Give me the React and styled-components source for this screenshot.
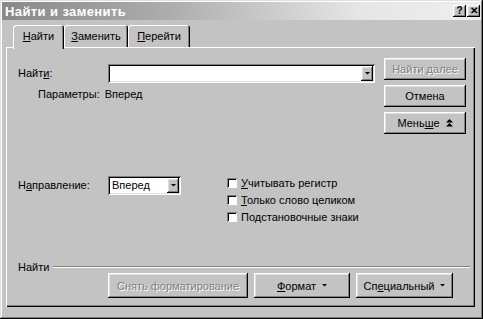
import React from 'react'
import styled, { createGlobalStyle } from 'styled-components'

const GlobalStyle = createGlobalStyle`
  html, body {
    margin: 0;
    padding: 0;
    background: #c3c3c3;
  }
  * {
    box-sizing: border-box;
  }
`

const raised = `
  box-shadow: inset -1px -1px #000, inset 1px 1px #fff, inset -2px -2px #808080, inset 2px 2px #dfdfdf;
`
const sunken = `
  box-shadow: inset 1px 1px #808080, inset -1px -1px #fff, inset 2px 2px #000, inset -2px -2px #dfdfdf;
`

const Window = styled.div`
  width: 483px;
  height: 319px;
  padding: 2px;
  display: flex;
  flex-direction: column;
  background: #c3c3c3;
  font-family: 'Liberation Sans', Arial, sans-serif;
  font-size: 11px;
  color: #000;
  box-shadow: inset -1px -1px #000, inset 1px 1px #dfdfdf, inset -2px -2px #808080, inset 2px 2px #fff;
`

const TitleBar = styled.div`
  height: 18px;
  display: flex;
  align-items: center;
  justify-content: space-between;
  padding: 0 1px 0 3px;
  background: linear-gradient(to right, #888888 0%, #adadad 35%, #e6e6e6 75%, #eeeeee 100%);
`

const Title = styled.span`
  color: #fff;
  font-weight: bold;
  font-size: 13px;
  letter-spacing: 0.4px;
`

const TitleButtons = styled.div`
  display: flex;
  gap: 1px;
`

const TitleButton = styled.div`
  width: 13px;
  height: 12px;
  background: #c3c3c3;
  ${raised}
  display: flex;
  align-items: center;
  justify-content: center;
  font-weight: bold;
  font-size: 10px;
  line-height: 1;
  padding-bottom: 1px;
`

const Content = styled.div`
  flex: 1;
  display: flex;
  flex-direction: column;
  padding: 1px 6px 10px 4px;
`

const TabRow = styled.div`
  height: 26px;
  display: flex;
  align-items: flex-end;
  padding-left: 7px;
`

const Tab = styled.div`
  width: ${p => p.$w}px;
  height: ${p => (p.$active ? 24 : 22)}px;
  margin-bottom: ${p => (p.$active ? -2 : 0)}px;
  position: relative;
  z-index: ${p => (p.$active ? 1 : 0)};
  background: #c3c3c3;
  border-radius: 3px 3px 0 0;
  box-shadow: inset 1px 1px #fff, inset -1px 0 #000, inset -2px 0 #808080;
  display: flex;
  align-items: center;
  justify-content: center;
  padding-bottom: ${p => (p.$active ? 2 : 0)}px;
`

const Key = styled.span`
  text-decoration: underline;
`

const Panel = styled.div`
  flex: 1;
  display: flex;
  flex-direction: column;
  padding: 11px 9px 9px 12px;
  box-shadow: inset 1px 1px #fff, inset -1px -1px #000, inset -2px -2px #808080;
`

const TopArea = styled.div`
  display: flex;
  gap: 9px;
`

const LeftColumn = styled.div`
  flex: 1;
  padding-top: 6px;
  display: flex;
  flex-direction: column;
`

const FieldRow = styled.div`
  display: flex;
  align-items: center;
`

const Label = styled.div`
  width: 90px;
  line-height: 19px;
`

const Combo = styled.div`
  width: ${p => p.$w}px;
  height: 19px;
  background: #fff;
  ${sunken}
  display: flex;
  align-items: stretch;
  justify-content: space-between;
  padding: 2px;
`

const ComboText = styled.span`
  padding-left: 2px;
  line-height: 15px;
`

const ComboArrow = styled.div`
  width: 12px;
  background: #c3c3c3;
  ${raised}
  display: flex;
  align-items: center;
  justify-content: center;
`

const ParamsRow = styled.div`
  margin-top: 4px;
  padding-left: 20px;
  line-height: 14px;
  display: flex;
  gap: 5px;
`

const ButtonColumn = styled.div`
  width: 82px;
  display: flex;
  flex-direction: column;
  gap: 5px;
`

const Button = styled.div`
  width: ${p => p.$w || 82}px;
  height: ${p => p.$h || 22}px;
  background: #c3c3c3;
  ${raised}
  display: flex;
  align-items: center;
  justify-content: center;
  gap: 6px;
  color: ${p => (p.$disabled ? '#808080' : '#000')};
  text-shadow: ${p => (p.$disabled ? '1px 1px #fff' : 'none')};
`

const DirectionArea = styled.div`
  margin-top: 42px;
  display: flex;
  align-items: flex-start;
`

const Checks = styled.div`
  margin-left: 46px;
  display: flex;
  flex-direction: column;
  gap: 3px;
`

const CheckRow = styled.div`
  display: flex;
  align-items: center;
  gap: 4px;
  line-height: 14px;
`

const CheckBox = styled.div`
  width: 10px;
  height: 10px;
  background: #fff;
  box-shadow: inset 1px 1px #808080, inset -1px -1px #fff, inset 2px 2px #000;
`

const Bottom = styled.div`
  margin-top: auto;
  display: flex;
  flex-direction: column;
`

const SectionHeader = styled.div`
  display: flex;
  align-items: center;
  gap: 4px;
  line-height: 12px;
  margin-right: -4px;
`

const Etched = styled.div`
  flex: 1;
  height: 2px;
  border-top: 1px solid #808080;
  border-bottom: 1px solid #fff;
`

const ButtonRow = styled.div`
  display: flex;
  gap: 6px;
  padding-left: 90px;
`

const DownArrow = ({ small }) => (
  <svg width={small ? 5 : 7} height={small ? 3 : 4} viewBox="0 0 7 4">
    <polygon points="0,0 7,0 3.5,3.5" fill="#000" />
  </svg>
)

const DoubleUp = () => (
  <svg width="7" height="8" viewBox="0 0 7 8">
    <polygon points="3.5,0 7,3.5 0,3.5" fill="#000" />
    <polygon points="3.5,4 7,7.5 0,7.5" fill="#000" />
  </svg>
)

export default function App() {
  return (
    <>
      <GlobalStyle />
      <Window>
        <TitleBar>
          <Title>Найти и заменить</Title>
          <TitleButtons>
            <TitleButton>?</TitleButton>
            <TitleButton>✕</TitleButton>
          </TitleButtons>
        </TitleBar>
        <Content>
          <TabRow>
            <Tab $w={51} $active>
              <span><Key>Н</Key>айти</span>
            </Tab>
            <Tab $w={64}>
              <span><Key>З</Key>аменить</span>
            </Tab>
            <Tab $w={62}>
              <span><Key>П</Key>ерейти</span>
            </Tab>
          </TabRow>
          <Panel>
            <TopArea>
              <LeftColumn>
                <FieldRow>
                  <Label>Найт<Key>и</Key>:</Label>
                  <Combo $w={267}>
                    <ComboText />
                    <ComboArrow><DownArrow small /></ComboArrow>
                  </Combo>
                </FieldRow>
                <ParamsRow>
                  <span>Параметры:</span>
                  <span>Вперед</span>
                </ParamsRow>
              </LeftColumn>
              <ButtonColumn>
                <Button $disabled>Найти далее</Button>
                <Button>Отмена</Button>
                <Button>
                  <span>Мень<Key>ш</Key>е</span>
                  <DoubleUp />
                </Button>
              </ButtonColumn>
            </TopArea>

            <DirectionArea>
              <Label>Н<Key>а</Key>правление:</Label>
              <Combo $w={73}>
                <ComboText>Вперед</ComboText>
                <ComboArrow><DownArrow small /></ComboArrow>
              </Combo>
              <Checks>
                <CheckRow>
                  <CheckBox />
                  <span><Key>У</Key>читывать регистр</span>
                </CheckRow>
                <CheckRow>
                  <CheckBox />
                  <span><Key>Т</Key>олько слово целиком</span>
                </CheckRow>
                <CheckRow>
                  <CheckBox />
                  <span>По<Key>д</Key>становочные знаки</span>
                </CheckRow>
              </Checks>
            </DirectionArea>

            <Bottom>
              <SectionHeader>
                <span>Найти</span>
                <Etched />
              </SectionHeader>
              <ButtonRow>
                <Button $w={140} $h={25} $disabled>Снять форматирование</Button>
                <Button $w={96} $h={25}>
                  <span><Key>Ф</Key>ормат</span>
                  <DownArrow small />
                </Button>
                <Button $w={97} $h={25}>
                  <span>Сп<Key>е</Key>циальный</span>
                  <DownArrow small />
                </Button>
              </ButtonRow>
            </Bottom>
          </Panel>
        </Content>
      </Window>
    </>
  )
}
